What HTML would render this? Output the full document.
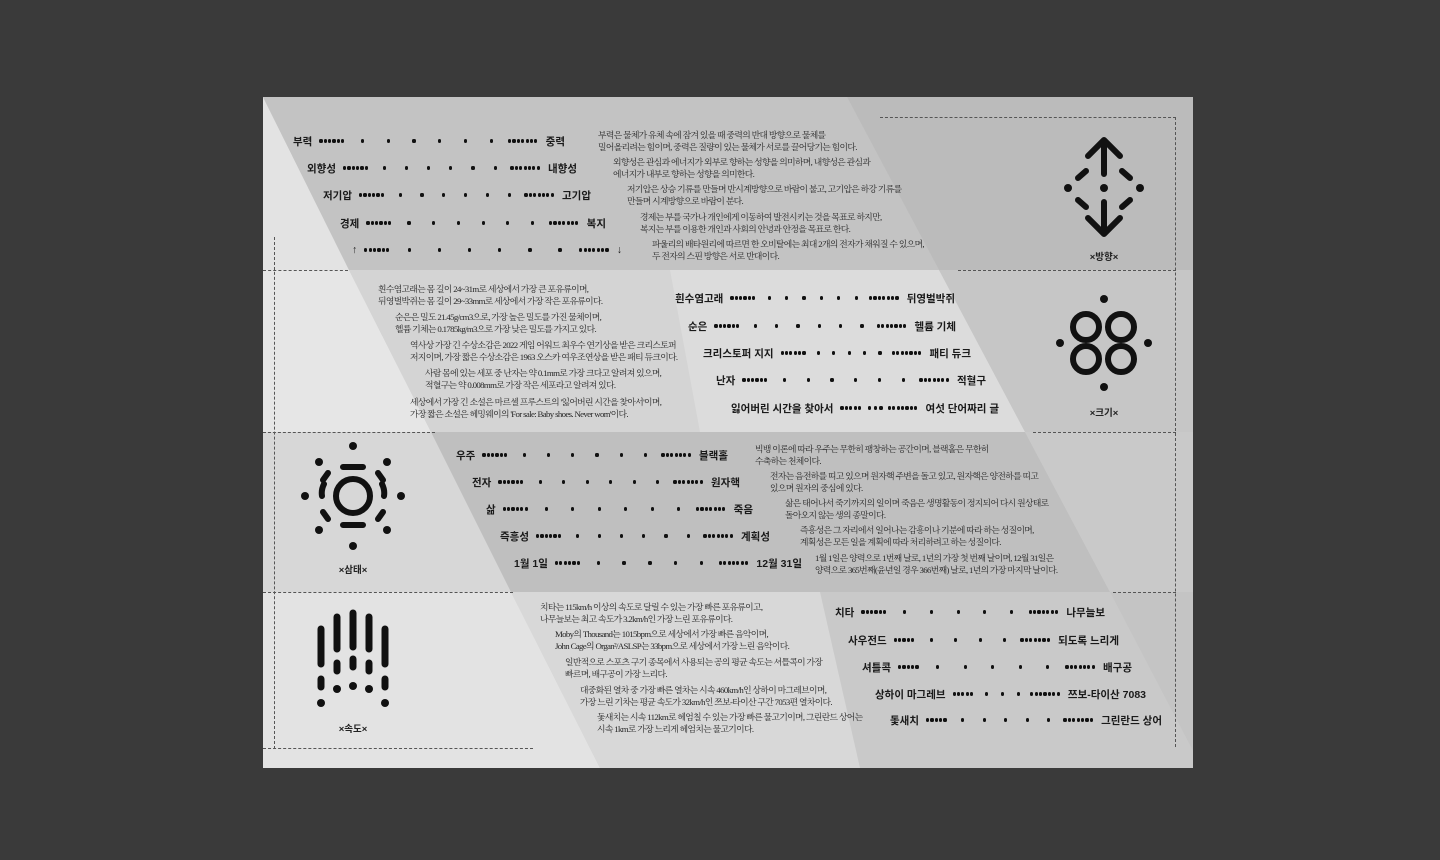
<!DOCTYPE html>
<html><head><meta charset="utf-8">
<style>
*{margin:0;padding:0;box-sizing:border-box}
body{width:1440px;height:860px;background:#3a3a3a;position:relative;overflow:hidden;font-family:"Liberation Sans","Noto Sans CJK KR",sans-serif}
#paper{position:absolute;left:263px;top:97px;width:930px;height:671px;overflow:hidden;background:#ccc}
.abs{position:absolute}
.p{position:absolute;font-family:"Liberation Serif","Noto Serif CJK KR",serif;font-size:8.8px;letter-spacing:-0.65px;line-height:12px;color:#262626;white-space:nowrap}
.row{position:absolute;display:flex;align-items:center;height:14px;font-size:10.5px;font-weight:bold;color:#1a1a1a;white-space:nowrap}
.dl{display:flex;align-items:center;margin:0 7px}
.dl b,.dl s{display:flex;align-items:center;text-decoration:none}
.dl b i{margin-right:1.2px}
.dl s{flex:1;justify-content:space-around;padding:0 4px}
.dl i{display:block;width:3.2px;height:3.2px;border-radius:50%;background:#111}
.hd{position:absolute;height:0;border-top:1px dashed #555}
.vd{position:absolute;width:0;border-left:1px dashed #555}
.lab{position:absolute;font-size:9.5px;color:#222;font-weight:bold;transform:translateX(-50%);white-space:nowrap}
</style></head><body>
<div id="paper">
<svg class="abs" style="left:0;top:0" width="930" height="671" viewBox="263 97 930 671">
<polygon points="263,97 263,270 349,270" fill="#e3e3e3"/>
<polygon points="263,97 847,97 939,270 349,270" fill="#c3c3c3"/>
<polygon points="847,97 1193,97 1193,270 939,270" fill="#bbbbbb"/>
<polygon points="263,270 349,270 431,432 263,432" fill="#e6e6e6"/>
<polygon points="349,270 939,270 1025,432 431,432" fill="#d4d4d4"/>
<polygon points="670,270 939,270 1025,432 700,432" fill="#dcdcdc"/>
<polygon points="939,270 1193,270 1193,432 1025,432" fill="#c6c6c6"/>
<polygon points="263,432 431,432 511,592 263,592" fill="#d7d7d7"/>
<polygon points="431,432 1025,432 1110,592 511,592" fill="#bfbfbf"/>
<polygon points="1025,432 1193,432 1193,592 1110,592" fill="#c9c9c9"/>
<polygon points="263,592 511,592 600,768 263,768" fill="#e3e3e3"/>
<polygon points="511,592 1110,592 1202,768 600,768" fill="#d8d8d8"/>
<polygon points="820,592 1193,592 1193,768 860,768" fill="#c9c9c9"/>
<polygon points="1110,592 1193,592 1193,768 1202,768" fill="#c4c4c4"/>
</svg>

<div class="hd" style="left:617px;top:20px;width:296px"></div>
<div class="vd" style="left:912px;top:20px;height:630px"></div>
<div class="hd" style="left:0;top:173px;width:85px"></div>
<div class="hd" style="left:695px;top:173px;width:218px"></div>
<div class="hd" style="left:0;top:335px;width:172px"></div>
<div class="hd" style="left:770px;top:335px;width:143px"></div>
<div class="hd" style="left:0;top:495px;width:250px"></div>
<div class="hd" style="left:850px;top:495px;width:63px"></div>
<div class="hd" style="left:0;top:651px;width:270px"></div>
<div class="vd" style="left:11px;top:140px;height:512px"></div>

<div class="row" style="left:30px;top:37px;width:272px">부력<div class="dl" style="flex:1"><b><i></i><i></i><i></i><i></i><i></i><i></i></b><s><i></i><i></i><i></i><i></i><i></i><i></i></s><b><i></i><i></i><i></i><i></i><i></i><i></i><i></i></b></div>중력</div>
<div class="row" style="left:44px;top:64px;width:270px">외향성<div class="dl" style="flex:1"><b><i></i><i></i><i></i><i></i><i></i><i></i></b><s><i></i><i></i><i></i><i></i><i></i><i></i></s><b><i></i><i></i><i></i><i></i><i></i><i></i><i></i></b></div>내향성</div>
<div class="row" style="left:60px;top:91px;width:268px">저기압<div class="dl" style="flex:1"><b><i></i><i></i><i></i><i></i><i></i><i></i></b><s><i></i><i></i><i></i><i></i><i></i><i></i></s><b><i></i><i></i><i></i><i></i><i></i><i></i><i></i></b></div>고기압</div>
<div class="row" style="left:77px;top:119px;width:266px">경제<div class="dl" style="flex:1"><b><i></i><i></i><i></i><i></i><i></i><i></i></b><s><i></i><i></i><i></i><i></i><i></i><i></i></s><b><i></i><i></i><i></i><i></i><i></i><i></i><i></i></b></div>복지</div>
<div class="row" style="left:89px;top:146px;width:270px">↑<div class="dl" style="flex:1"><b><i></i><i></i><i></i><i></i><i></i><i></i></b><s><i></i><i></i><i></i><i></i><i></i><i></i></s><b><i></i><i></i><i></i><i></i><i></i><i></i><i></i></b></div>↓</div>

<div class="p" style="left:335px;top:32px">부력은 물체가 유체 속에 잠겨 있을 때 중력의 반대 방향으로 물체를<br>밀어올리려는 힘이며, 중력은 질량이 있는 물체가 서로를 끌어당기는 힘이다.</div>
<div class="p" style="left:350px;top:59px">외향성은 관심과 에너지가 외부로 향하는 성향을 의미하며, 내향성은 관심과<br>에너지가 내부로 향하는 성향을 의미한다.</div>
<div class="p" style="left:364px;top:86px">저기압은 상승 기류를 만들며 반시계방향으로 바람이 불고, 고기압은 하강 기류를<br>만들며 시계방향으로 바람이 분다.</div>
<div class="p" style="left:377px;top:114px">경제는 부를 국가나 개인에게 이동하여 발전시키는 것을 목표로 하지만,<br>복지는 부를 이용한 개인과 사회의 안녕과 안정을 목표로 한다.</div>
<div class="p" style="left:389px;top:141px">파울리의 배타원리에 따르면 한 오비탈에는 최대 2개의 전자가 채워질 수 있으며,<br>두 전자의 스핀 방향은 서로 반대이다.</div>

<div class="p" style="left:115px;top:186px">흰수염고래는 몸 길이 24~31m로 세상에서 가장 큰 포유류이며,<br>뒤영벌박쥐는 몸 길이 29~33mm로 세상에서 가장 작은 포유류이다.</div>
<div class="p" style="left:132px;top:214px">순은은 밀도 21.45g/cm3으로, 가장 높은 밀도를 가진 물체이며,<br>헬륨 기체는 0.1785kg/m3으로 가장 낮은 밀도를 가지고 있다.</div>
<div class="p" style="left:147px;top:242px">역사상 가장 긴 수상소감은 2022 게임 어워드 최우수 연기상을 받은 크리스토퍼<br>저지이며, 가장 짧은 수상소감은 1963 오스카 여우조연상을 받은 패티 듀크이다.</div>
<div class="p" style="left:162px;top:270px">사람 몸에 있는 세포 중 난자는 약 0.1mm로 가장 크다고 알려져 있으며,<br>적혈구는 약 0.008mm로 가장 작은 세포라고 알려져 있다.</div>
<div class="p" style="left:147px;top:299px">세상에서 가장 긴 소설은 마르셀 프루스트의 '잃어버린 시간을 찾아서'이며,<br>가장 짧은 소설은 헤밍웨이의 'For sale: Baby shoes. Never worn'이다.</div>

<div class="row" style="left:412px;top:194px;width:280px">흰수염고래<div class="dl" style="flex:1"><b><i></i><i></i><i></i><i></i><i></i><i></i></b><s><i></i><i></i><i></i><i></i><i></i><i></i></s><b><i></i><i></i><i></i><i></i><i></i><i></i><i></i></b></div>뒤영벌박쥐</div>
<div class="row" style="left:425px;top:222px;width:268px">순은<div class="dl" style="flex:1"><b><i></i><i></i><i></i><i></i><i></i><i></i></b><s><i></i><i></i><i></i><i></i><i></i><i></i></s><b><i></i><i></i><i></i><i></i><i></i><i></i><i></i></b></div>헬륨 기체</div>
<div class="row" style="left:440px;top:249px;width:268px">크리스토퍼 지지<div class="dl" style="flex:1"><b><i></i><i></i><i></i><i></i><i></i><i></i></b><s><i></i><i></i><i></i><i></i><i></i></s><b><i></i><i></i><i></i><i></i><i></i><i></i><i></i></b></div>패티 듀크</div>
<div class="row" style="left:453px;top:276px;width:270px">난자<div class="dl" style="flex:1"><b><i></i><i></i><i></i><i></i><i></i><i></i></b><s><i></i><i></i><i></i><i></i><i></i><i></i></s><b><i></i><i></i><i></i><i></i><i></i><i></i><i></i></b></div>적혈구</div>
<div class="row" style="left:468px;top:304px;width:268px">잃어버린 시간을 찾아서<div class="dl" style="flex:1"><b><i></i><i></i><i></i><i></i><i></i></b><s><i></i><i></i><i></i></s><b><i></i><i></i><i></i><i></i><i></i><i></i><i></i></b></div>여섯 단어짜리 글</div>

<div class="row" style="left:193px;top:351px;width:272px">우주<div class="dl" style="flex:1"><b><i></i><i></i><i></i><i></i><i></i><i></i></b><s><i></i><i></i><i></i><i></i><i></i><i></i></s><b><i></i><i></i><i></i><i></i><i></i><i></i><i></i></b></div>블랙홀</div>
<div class="row" style="left:209px;top:378px;width:268px">전자<div class="dl" style="flex:1"><b><i></i><i></i><i></i><i></i><i></i><i></i></b><s><i></i><i></i><i></i><i></i><i></i><i></i></s><b><i></i><i></i><i></i><i></i><i></i><i></i><i></i></b></div>원자핵</div>
<div class="row" style="left:223px;top:405px;width:267px">삶<div class="dl" style="flex:1"><b><i></i><i></i><i></i><i></i><i></i><i></i></b><s><i></i><i></i><i></i><i></i><i></i><i></i></s><b><i></i><i></i><i></i><i></i><i></i><i></i><i></i></b></div>죽음</div>
<div class="row" style="left:237px;top:432px;width:270px">즉흥성<div class="dl" style="flex:1"><b><i></i><i></i><i></i><i></i><i></i><i></i></b><s><i></i><i></i><i></i><i></i><i></i><i></i></s><b><i></i><i></i><i></i><i></i><i></i><i></i><i></i></b></div>계획성</div>
<div class="row" style="left:251px;top:459px;width:288px">1월 1일<div class="dl" style="flex:1"><b><i></i><i></i><i></i><i></i><i></i><i></i></b><s><i></i><i></i><i></i><i></i><i></i></s><b><i></i><i></i><i></i><i></i><i></i><i></i><i></i></b></div>12월 31일</div>

<div class="p" style="left:492px;top:346px">빅뱅 이론에 따라 우주는 무한히 팽창하는 공간이며, 블랙홀은 무한히<br>수축하는 천체이다.</div>
<div class="p" style="left:507px;top:373px">전자는 음전하를 띠고 있으며 원자핵 주변을 돌고 있고, 원자핵은 양전하를 띠고<br>있으며 원자의 중심에 있다.</div>
<div class="p" style="left:522px;top:400px">삶은 태어나서 죽기까지의 일이며 죽음은 생명활동이 정지되어 다시 원상태로<br>돌아오지 않는 생의 종말이다.</div>
<div class="p" style="left:537px;top:427px">즉흥성은 그 자리에서 일어나는 감흥이나 기분에 따라 하는 성질이며,<br>계획성은 모든 일을 계획에 따라 처리하려고 하는 성질이다.</div>
<div class="p" style="left:552px;top:455px">1월 1일은 양력으로 1번째 날로, 1년의 가장 첫 번째 날이며, 12월 31일은<br>양력으로 365번째(윤년일 경우 366번째) 날로, 1년의 가장 마지막 날이다.</div>

<div class="p" style="left:277px;top:504px">치타는 115km/h 이상의 속도로 달릴 수 있는 가장 빠른 포유류이고,<br>나무늘보는 최고 속도가 3.2km/h인 가장 느린 포유류이다.</div>
<div class="p" style="left:292px;top:531px">Moby의 Thousand는 1015bpm으로 세상에서 가장 빠른 음악이며,<br>John Cage의 Organ²/ASLSP는 33bpm으로 세상에서 가장 느린 음악이다.</div>
<div class="p" style="left:302px;top:559px">일반적으로 스포츠 구기 종목에서 사용되는 공의 평균 속도는 셔틀콕이 가장<br>빠르며, 배구공이 가장 느리다.</div>
<div class="p" style="left:317px;top:587px">대중화된 열차 중 가장 빠른 열차는 시속 460km/h인 상하이 마그레브이며,<br>가장 느린 기차는 평균 속도가 32km/h인 쯔보-타이산 구간 7053편 열차이다.</div>
<div class="p" style="left:334px;top:614px">돛새치는 시속 112km로 헤엄칠 수 있는 가장 빠른 물고기이며, 그린란드 상어는<br>시속 1km로 가장 느리게 헤엄치는 물고기이다.</div>

<div class="row" style="left:572px;top:508px;width:270px">치타<div class="dl" style="flex:1"><b><i></i><i></i><i></i><i></i><i></i><i></i></b><s><i></i><i></i><i></i><i></i><i></i></s><b><i></i><i></i><i></i><i></i><i></i><i></i><i></i></b></div>나무늘보</div>
<div class="row" style="left:585px;top:536px;width:271px">사우전드<div class="dl" style="flex:1"><b><i></i><i></i><i></i><i></i><i></i></b><s><i></i><i></i><i></i><i></i></s><b><i></i><i></i><i></i><i></i><i></i><i></i><i></i></b></div>되도록 느리게</div>
<div class="row" style="left:599px;top:563px;width:270px">셔틀콕<div class="dl" style="flex:1"><b><i></i><i></i><i></i><i></i><i></i></b><s><i></i><i></i><i></i><i></i><i></i></s><b><i></i><i></i><i></i><i></i><i></i><i></i><i></i></b></div>배구공</div>
<div class="row" style="left:612px;top:590px;width:271px">상하이 마그레브<div class="dl" style="flex:1"><b><i></i><i></i><i></i><i></i><i></i></b><s><i></i><i></i><i></i></s><b><i></i><i></i><i></i><i></i><i></i><i></i><i></i></b></div>쯔보-타이산 7083</div>
<div class="row" style="left:627px;top:616px;width:272px">돛새치<div class="dl" style="flex:1"><b><i></i><i></i><i></i><i></i><i></i></b><s><i></i><i></i><i></i><i></i><i></i></s><b><i></i><i></i><i></i><i></i><i></i><i></i><i></i></b></div>그린란드 상어</div>

<svg class="abs" style="left:787px;top:37px" width="110" height="110" viewBox="0 0 110 110" fill="none" stroke="#111" stroke-width="6" stroke-linecap="round" stroke-linejoin="round">
<path d="M54 6 V40 M38 22 L54 6 L70 22"/>
<path d="M54 68 V100 M38 84 L54 100 L70 84"/>
<path d="M28 44 L36 37 M72 37 L80 44 M28 66 L36 73 M72 73 L80 66"/>
<g fill="#111" stroke="none"><circle cx="54" cy="54" r="4"/><circle cx="18" cy="54" r="4"/><circle cx="90" cy="54" r="4"/></g>
</svg>
<div class="lab" style="left:841px;top:152px">×방향×</div>

<svg class="abs" style="left:788px;top:196px" width="106" height="100" viewBox="0 0 106 100" fill="none" stroke="#111" stroke-width="6">
<circle cx="35" cy="34" r="13"/><circle cx="70" cy="34" r="13"/><circle cx="35" cy="66" r="13"/><circle cx="70" cy="66" r="13"/>
<g fill="#111" stroke="none"><circle cx="53" cy="6" r="4"/><circle cx="53" cy="94" r="4"/><circle cx="9" cy="50" r="4"/><circle cx="97" cy="50" r="4"/></g>
</svg>
<div class="lab" style="left:841px;top:308px">×크기×</div>

<svg class="abs" style="left:34px;top:343px" width="112" height="112" viewBox="0 0 112 112" fill="none" stroke="#111" stroke-width="6" stroke-linecap="round">
<circle cx="56" cy="56" r="17"/>
<path d="M46 27 H66 M46 85 H66"/>
<path d="M27 44 Q24 50 25 56 M85 44 Q88 50 87 56" />
<path d="M31 33 L26 40 M81 33 L86 40 M26 72 L31 79 M86 72 L81 79"/>
<g fill="#111" stroke="none"><circle cx="56" cy="6" r="4"/><circle cx="56" cy="106" r="4"/><circle cx="8" cy="56" r="4"/><circle cx="104" cy="56" r="4"/><circle cx="22" cy="22" r="4"/><circle cx="90" cy="22" r="4"/><circle cx="22" cy="90" r="4"/><circle cx="90" cy="90" r="4"/></g>
</svg>
<div class="lab" style="left:90px;top:465px">×삼태×</div>

<svg class="abs" style="left:50px;top:512px" width="80" height="100" viewBox="0 0 80 100" fill="none" stroke="#111" stroke-width="7" stroke-linecap="round">
<path d="M8 20 V55 M24 8 V40 M40 4 V38 M56 8 V40 M72 20 V55"/>
<path d="M24 54 V62 M40 50 V58 M56 54 V62 M8 70 V78 M72 70 V78"/>
<g fill="#111" stroke="none"><circle cx="24" cy="80" r="4"/><circle cx="40" cy="77" r="4"/><circle cx="56" cy="80" r="4"/><circle cx="8" cy="94" r="4"/><circle cx="72" cy="94" r="4"/></g>
</svg>
<div class="lab" style="left:90px;top:624px">×속도×</div>
</div>
</body></html>
